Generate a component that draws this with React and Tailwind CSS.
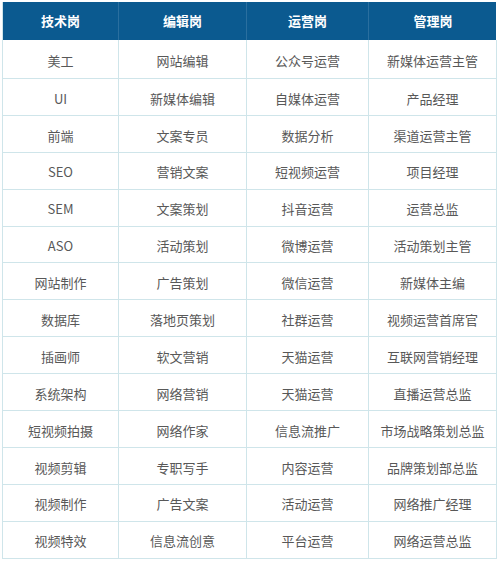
import React from "react";

const headers = ["技术岗", "编辑岗", "运营岗", "管理岗"];

const rows = [
  ["美工", "网站编辑", "公众号运营", "新媒体运营主管"],
  ["UI", "新媒体编辑", "自媒体运营", "产品经理"],
  ["前端", "文案专员", "数据分析", "渠道运营主管"],
  ["SEO", "营销文案", "短视频运营", "项目经理"],
  ["SEM", "文案策划", "抖音运营", "运营总监"],
  ["ASO", "活动策划", "微博运营", "活动策划主管"],
  ["网站制作", "广告策划", "微信运营", "新媒体主编"],
  ["数据库", "落地页策划", "社群运营", "视频运营首席官"],
  ["插画师", "软文营销", "天猫运营", "互联网营销经理"],
  ["系统架构", "网络营销", "天猫运营", "直播运营总监"],
  ["短视频拍摄", "网络作家", "信息流推广", "市场战略策划总监"],
  ["视频剪辑", "专职写手", "内容运营", "品牌策划部总监"],
  ["视频制作", "广告文案", "活动运营", "网络推广经理"],
  ["视频特效", "信息流创意", "平台运营", "网络运营总监"],
];

const cols = "grid grid-cols-[116px_128px_122px_128px]";

const App = () => {
  return (
    <div className="w-[500px] h-[566px] bg-white pt-[2px] pl-[2px] font-['Noto_Sans_CJK_SC','Noto_Sans',sans-serif]">
      <div className="w-[494px] border-l border-[#cfe5ea]">
        <div className={`${cols} h-[38px] bg-[#0b5a90] text-white text-[13px] font-bold`}>
          {headers.map((h, i) => (
            <div
              key={h}
              className={`flex items-center justify-center ${
                i < 3 ? "border-r border-[#2a6f9f]" : ""
              }`}
            >
              {h}
            </div>
          ))}
        </div>
        {rows.map((row, r) => (
          <div
            key={r}
            className={`${cols} ${
              r === 0 ? "h-[39px]" : "h-[36.9px]"
            } text-[13px] text-[#585858]`}
          >
            {row.map((cell, c) => (
              <div
                key={c}
                className="flex items-center justify-center pt-[3px] border-r border-b border-[#cfe5ea]"
              >
                {cell}
              </div>
            ))}
          </div>
        ))}
      </div>
    </div>
  );
};

export default App;
